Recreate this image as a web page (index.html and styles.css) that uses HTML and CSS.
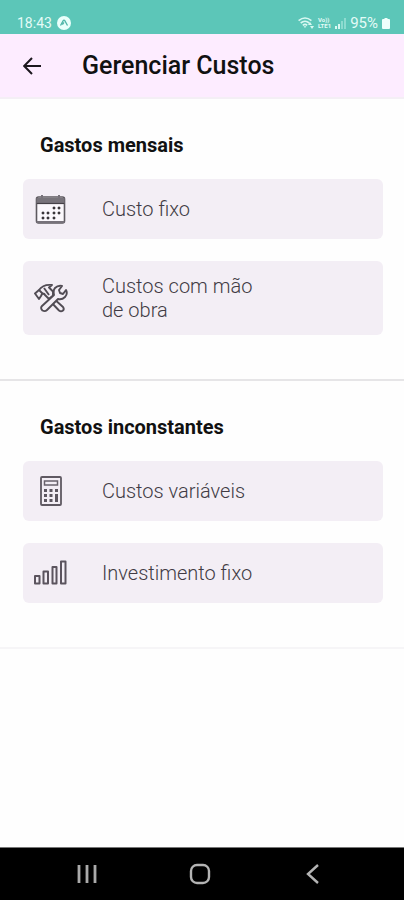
FILE: index.html
```html
<!DOCTYPE html>
<html lang="pt-BR">
<head>
<meta charset="utf-8">
<meta name="viewport" content="width=device-width, initial-scale=1">
<title>Gerenciar Custos</title>
<link rel="stylesheet" href="styles.css">
</head>
<body>
<div class="status">
  <div class="status-group">
    <span>18:43</span>
    <svg width="14" height="14" viewBox="0 0 14 14" aria-hidden="true"><circle cx="7" cy="7" r="7" fill="#e9fffb"/><path d="M3.5 9.5 6.2 4.7Q7 3.5 7.8 4.7L10.5 9.5M5.4 8.6 7 6.4" fill="none" stroke="#4fb5a8" stroke-width="1.3"/></svg>
  </div>
  <div class="status-group status-right">
    <svg width="16" height="12" viewBox="0 0 16 12" aria-hidden="true"><g fill="none" stroke="#d9f8f2" stroke-width="1.6"><path d="M.6 3.6Q7 -1.6 13.4 3.6M2.7 6Q7 2.6 11.3 6M4.8 8.3Q7 6.4 9.2 8.3"/></g><path d="M5.6 9.2h2.8L7 11zM10 8l2-3 2 3zM12 9h4l-2 3z" fill="#d9f8f2"/></svg>
    <span class="volte"><span>Vo))</span><span>LTE1</span></span>
    <svg width="11" height="11" viewBox="0 0 11 11" aria-hidden="true"><path d="M0 8h2v3H0zM3 6h2v5H3z" fill="#d9f8f2"/><path d="M6 3h2v8H6zM9 0h2v11H9z" fill="#8ddbd0"/></svg>
    <span class="percent">95%</span>
    <svg width="8" height="11" viewBox="0 0 8 11" aria-hidden="true"><path d="M2.500 0h3v1H7q1 0 1 1v8q0 1-1 1H1q-1 0-1-1V2q0-1 1-1h1.500z" fill="#effffc"/></svg>
  </div>
</div>
<header class="header">
  <button class="back" type="button" aria-label="Voltar"><svg width="18" height="18" viewBox="0 0 18 18" fill="none" stroke="#1c171e" stroke-width="2"><path d="M18 9H1.500M9 1 1.200 9 9 17"/></svg></button>
  <h1>Gerenciar Custos</h1>
</header>
<main>
  <section class="section">
    <h2>Gastos mensais</h2>
    <button class="card" type="button">
      <svg class="icon" viewBox="0 0 34 34" aria-hidden="true"><rect x="2.500" y="5" width="28" height="26" rx="2" fill="#fbf8fc" stroke="#5d595f" stroke-width="1.600"/><path d="M2.500 6h28v5h-28z" fill="#77737a"/><path d="M3 11.500h27" stroke="#454147" stroke-width="1.200"/><path d="M8 3v3M25 3v3" stroke="#77727a" stroke-width="2"/><path d="M2.500 30h28" stroke="#77727a" stroke-width="2"/><path d="M19 15h2v2h-2zM24 15h2v2h-2zM8 20h2v2H8zM13 20h2v2h-2zM19 20h2v2h-2zM24 20h2v2h-2zM8 25h2v2H8zM13 25h2v2h-2zM19 25h2v2h-2z" fill="#39353b" stroke="#39353b" stroke-width=".6"/></svg>
      <span class="label">Custo fixo</span>
    </button>
    <button class="card" type="button">
      <svg class="icon" viewBox="0 0 34 34" fill="none" stroke="#514c54" stroke-width="1.900" stroke-linejoin="round" aria-hidden="true"><path d="m19 17 10 9q1.500 2 0 3.500-2 1.500-4 0L16 20"/><path d="M1 12.500 5 9q4-6 13-5l-3 2.500 4 4v4L15 18l-4-4q-1-2-3-1l-1 2-2 3zM5 9l4 4M10 7l5 7"/><path d="m8 25 12-11q-1-5 1-7 3-3 7-2l-3 4 1 3 3 1 3-4q2 4-1 7t-7 2L13 29q-2 2-4.500.5Q6 27 8 25z" fill="#f3eef5"/></svg>
      <span class="label">Custos com mão de obra</span>
    </button>
  </section>
  <section class="section section-last">
    <h2>Gastos inconstantes</h2>
    <button class="card" type="button">
      <svg class="icon" viewBox="0 0 34 34" aria-hidden="true"><rect x="7" y="3" width="20" height="28" rx="1" fill="none" stroke="#5f5962" stroke-width="1.800"/><rect x="10.500" y="7" width="13" height="4" fill="none" stroke="#69636c" stroke-width="1.500"/><path d="M10 15h3v3h-3zM15.500 15h3v3h-3zM21 15h3v3h-3zM10 20h3v3h-3zM15.500 20h3v3h-3zM10 25h3v3h-3zM15.500 25h3v3h-3zM21 20h3v8h-3z" fill="#5d5760"/></svg>
      <span class="label">Custos variáveis</span>
    </button>
    <button class="card" type="button">
      <svg class="icon" viewBox="0 0 34 34" fill="none" stroke="#5b545e" stroke-width="2" stroke-linejoin="round" aria-hidden="true"><path d="M1 20H5.500V27.500H1zM9.500 15.500H14v12H9.500zM18.500 11h4v16.500h-4zM27 5.500h4.500v22H27z"/></svg>
      <span class="label">Investimento fixo</span>
    </button>
  </section>
</main>
<nav class="navbar" aria-label="Sistema">
  <button type="button" aria-label="Recentes"><svg width="20" height="20" viewBox="0 0 20 20"><path d="M2 1v18M10 1v18M18 1v18" stroke="#aaa" stroke-width="2.800"/></svg></button>
  <button type="button" aria-label="Início"><svg width="22" height="22" viewBox="0 0 22 22"><rect x="2" y="2" width="18" height="18" rx="6" fill="none" stroke="#b4b4b4" stroke-width="2.400"/></svg></button>
  <button type="button" aria-label="Voltar"><svg width="20" height="20" viewBox="0 0 20 20"><path d="M15 1 5 10l10 9" fill="none" stroke="#b4b4b4" stroke-width="2.400"/></svg></button>
</nav>
</body>
</html>
```
FILE: styles.css
```css
* {
  box-sizing: border-box;
}

body {
  margin: 0;
  min-height: 100vh;
  display: flex;
  flex-direction: column;
  background: #fefefe;
  color: #111;
  font-family: Roboto, sans-serif;
}

button {
  border: 0;
  padding: 0;
  background: none;
  font: inherit;
  color: inherit;
}

svg {
  display: block;
  flex: none;
}

.status {
  height: 34px;
  padding: 12px 14px 0 17px;
  display: flex;
  justify-content: space-between;
  background: #5cc6b8;
  color: #e4fbf7;
  font-size: 14px;
  line-height: 22px;
}

.status-group {
  display: flex;
  align-items: center;
  gap: 5px;
}

.status-right {
  gap: 4px;
}

.percent {
  font-size: 15px;
}

.volte {
  display: flex;
  flex-direction: column;
  font-size: 6px;
  font-weight: 700;
  line-height: 6px;
}

.header {
  height: 65px;
  padding: 0 23px;
  display: flex;
  align-items: center;
  gap: 41px;
  background: #fdecff;
  border-bottom: 2px solid #f4eff5;
}

h1 {
  margin: 0;
  font-size: 25px;
  line-height: 32px;
  font-weight: 500;
}

main {
  flex: 1;
}

.section {
  padding: 34px 21px 44px 23px;
  display: flex;
  flex-direction: column;
  gap: 22px;
  border-bottom: 2px solid #e6e5e7;
}

.section-last {
  border-color: #f6f5f7;
}

h2 {
  margin: 0 17px;
  font-size: 20px;
  line-height: 24px;
  font-weight: 700;
}

.card {
  min-height: 60px;
  padding: 13px 11px;
  display: flex;
  align-items: center;
  gap: 34px;
  border-radius: 6px;
  background: #f3eef5;
  color: #413b44;
  text-align: left;
}

.icon {
  width: 34px;
  height: 34px;
}

.label {
  max-width: 160px;
  font-size: 20px;
  line-height: 24px;
  font-weight: 300;
}

.navbar {
  height: 53px;
  padding: 0 34px 0 30px;
  display: grid;
  grid-template-columns: repeat(3, 1fr);
  background: #000;
  border-top: 1px solid #777;
}

.navbar button {
  display: flex;
  align-items: center;
  justify-content: center;
}
```
